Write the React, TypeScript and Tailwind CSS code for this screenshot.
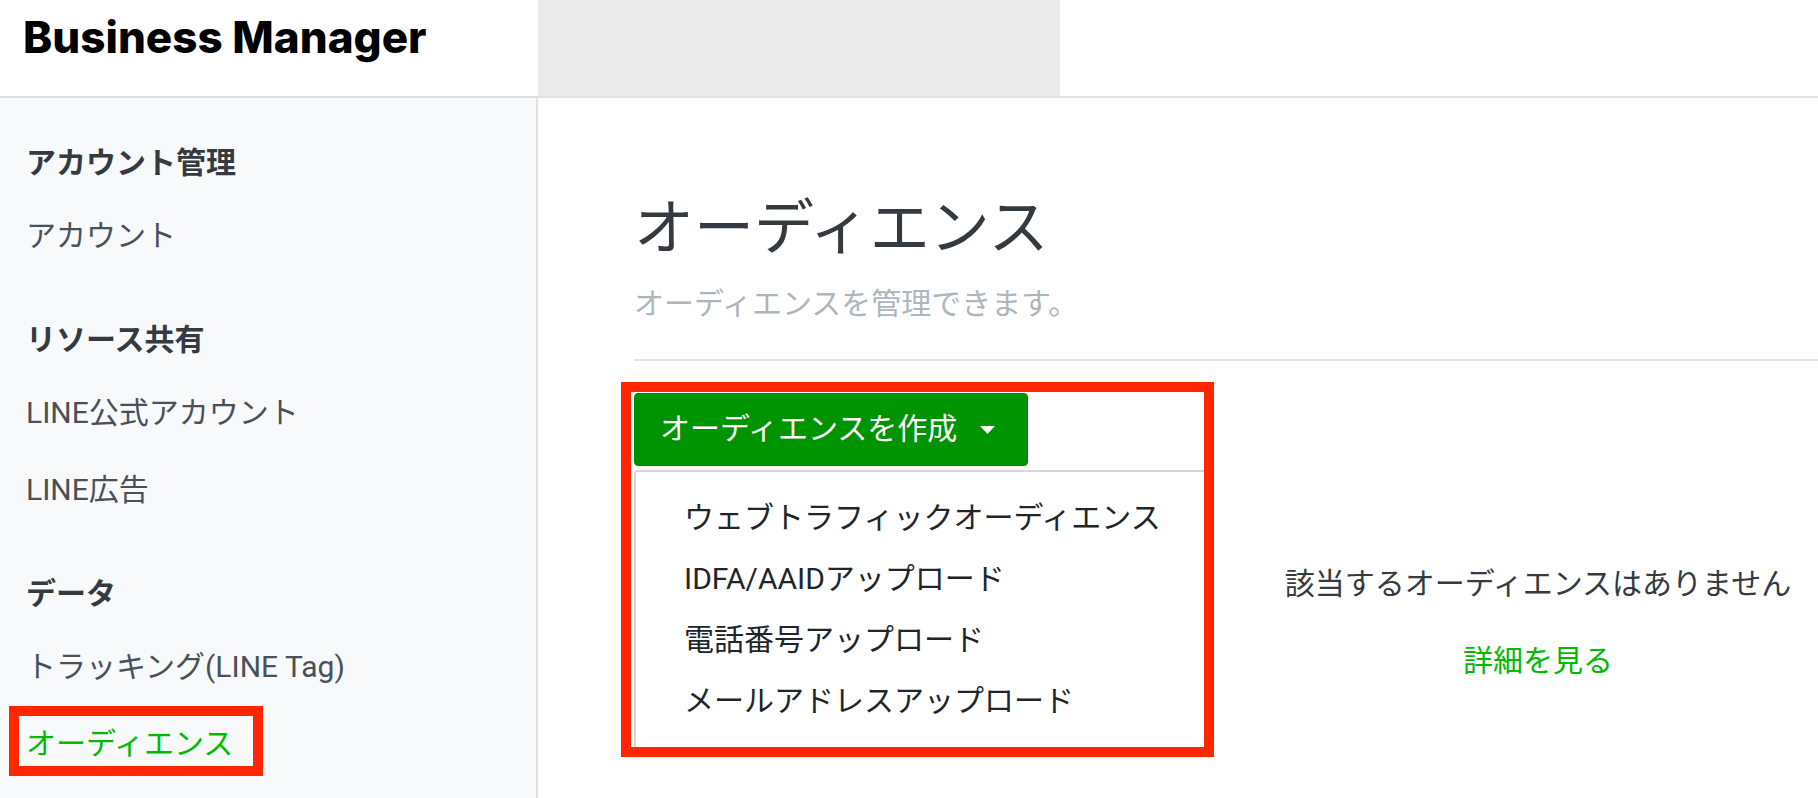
import React, { useState } from 'react';

type NavSection = {
  title: string;
  items: string[];
};

const sections: NavSection[] = [
  { title: 'アカウント管理', items: ['アカウント'] },
  { title: 'リソース共有', items: ['LINE公式アカウント', 'LINE広告'] },
  { title: 'データ', items: ['トラッキング(LINE Tag)', 'オーディエンス'] },
];

const uploadTypes = [
  'ウェブトラフィックオーディエンス',
  'IDFA/AAIDアップロード',
  '電話番号アップロード',
  'メールアドレスアップロード',
];

function Header() {
  return (
    <header className="flex h-[98px] border-b-2 border-[#dde1e6] bg-white">
      <div className="w-[538px] shrink-0 pt-[7px] pl-[23px]">
        <a href="#home" className="font-['Inter'] text-[44px] leading-[60px] font-extrabold whitespace-nowrap text-black">
          Business Manager
        </a>
      </div>
      <div className="w-[522px] bg-[#eaeaea]" />
    </header>
  );
}

function Sidebar({ active }: { active: string }) {
  return (
    <nav className="w-[538px] shrink-0 border-r-2 border-[#dfe1e6] bg-[#f7f9fb] pt-[43px] pl-[26px]">
      {sections.map((section) => (
        <section key={section.title} className="mb-[60px]">
          <h2 className="mb-[29px] leading-[44px] font-bold text-[#353a40]">{section.title}</h2>
          <ul className="flex flex-col gap-[33px]">
            {section.items.map((item) => (
              <li key={item} className="leading-[44px]">
                {item === active ? (
                  <a href="#active" aria-current="page" className="relative block w-[208px] text-[#00b900]">
                    {item}
                    <span className="absolute -top-[16px] -left-[17px] h-[70px] w-[254px] border-[10px] border-[#ff2600]" />
                  </a>
                ) : (
                  <a href="#item" className="text-[#495057]">{item}</a>
                )}
              </li>
            ))}
          </ul>
        </section>
      ))}
    </nav>
  );
}

function CreateMenu() {
  const [open, setOpen] = useState(true);

  return (
    <div className="-ml-[13px] h-[375px] w-[593px] shrink-0 overflow-hidden border-[10px] border-[#ff2600] pt-px pl-[3px]">
      <button
        type="button"
        aria-expanded={open}
        onClick={() => setOpen(!open)}
        className="flex h-[73px] w-[394px] items-center gap-[23px] rounded-[4px] border border-[#008700] bg-[#009300] pl-[25px] text-white"
      >
        <span className="pb-[2px] whitespace-nowrap">オーディエンスを作成</span>
        <svg width="15" height="8" viewBox="0 0 15 8" fill="currentColor" aria-hidden="true">
          <path d="M0 0h15L7.5 8z" />
        </svg>
      </button>
      {open && (
        <ul className="mt-1 h-[290px] w-[620px] rounded-tl-[4px] border-2 border-[#d6d6d6] pt-[15px] pl-[48px]">
          {uploadTypes.map((label) => (
            <li key={label}>
              <a href="#create" className="block leading-[61px] whitespace-nowrap text-[#212529]">{label}</a>
            </li>
          ))}
        </ul>
      )}
    </div>
  );
}

export default function App() {
  return (
    <div
      lang="ja"
      className="flex min-h-screen flex-col overflow-hidden bg-white font-['Roboto','Noto_Sans_CJK_JP',sans-serif] text-[30px]"
    >
      <Header />
      <div className="flex flex-1">
        <Sidebar active="オーディエンス" />
        <main className="min-w-0 flex-1 pt-[95px] pl-[96px]">
          <h1 className="text-[60px] leading-[72px] text-[#353a40]">オーディエンス</h1>
          <p className="mt-[17px] leading-[44px] text-[#adb5bd]">オーディエンスを管理できます。</p>
          <hr className="mt-[33px] mb-[21px] border-t-2 border-[#e4e4e4]" />
          <div className="flex">
            <CreateMenu />
            {/* Empty list */}
            <div className="flex flex-1 flex-col items-center pt-[180px] pl-[44px] leading-[44px]">
              <p className="whitespace-nowrap text-[#353a40]">該当するオーディエンスはありません</p>
              <a href="#details" className="mt-[33px] text-[#00b900]">詳細を見る</a>
            </div>
          </div>
        </main>
      </div>
    </div>
  );
}
